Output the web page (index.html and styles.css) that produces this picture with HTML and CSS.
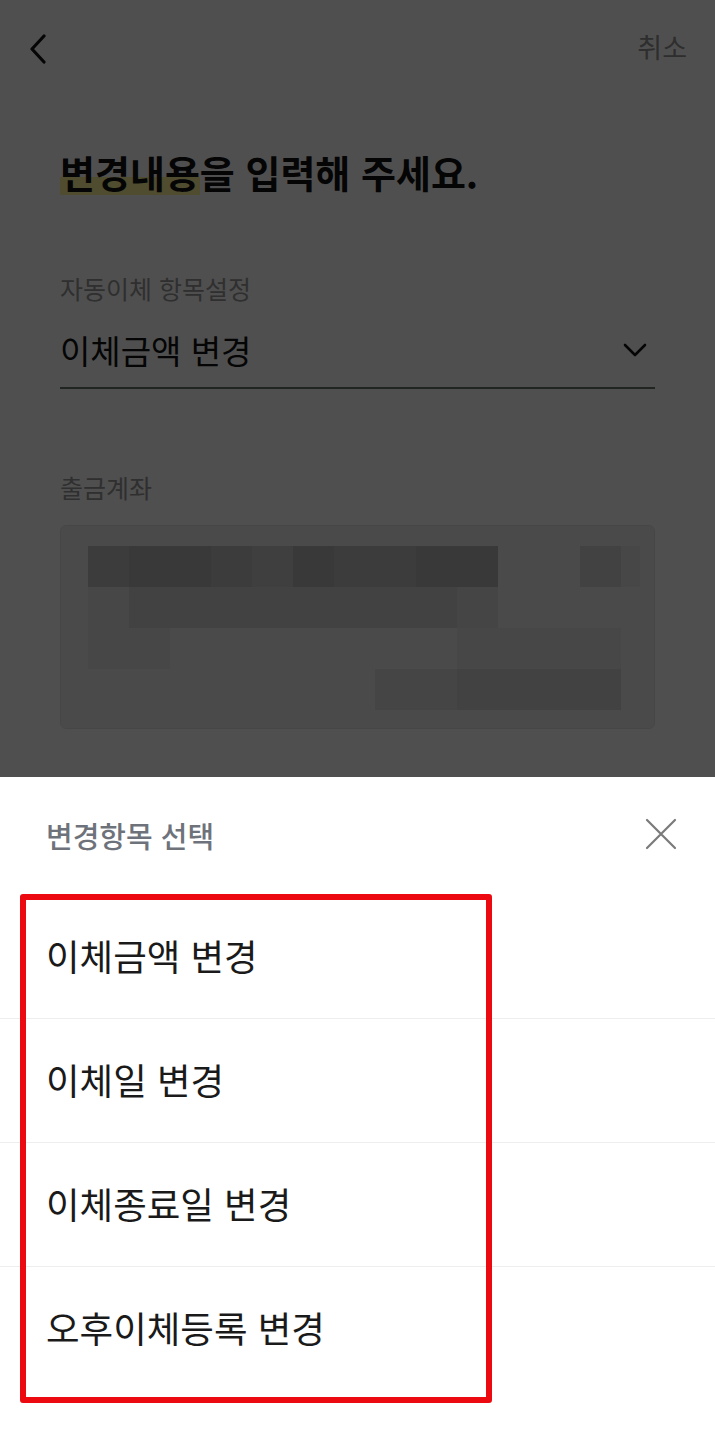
FILE: index.html
```html
<!DOCTYPE html>
<html lang="ko">
<head>
    <meta charset="UTF-8">
    <meta name="viewport" content="width=device-width, initial-scale=1.0">
    <title>자동이체 변경</title>
    <link rel="stylesheet" href="styles.css">
</head>
<body>
    <div class="screen">
        <header class="topbar">
            <button class="back" aria-label="뒤로">
                <svg width="20" height="30" viewBox="0 0 20 30"><path d="M16 2 L4 15 L16 28" fill="none" stroke="#111" stroke-width="3.2" stroke-linecap="round" stroke-linejoin="round"/></svg>
            </button>
            <span class="cancel">취소</span>
        </header>
        <main class="form">
            <h1><span class="mark-text">변경내용</span>을 입력해 주세요.</h1>
            <div class="field">
                <label>자동이체 항목설정</label>
                <div class="select">
                    <span>이체금액 변경</span>
                    <svg width="24" height="16" viewBox="0 0 24 16"><path d="M2 3 L12 13 L22 3" fill="none" stroke="#111" stroke-width="2.6" stroke-linecap="round" stroke-linejoin="round"/></svg>
                </div>
            </div>
            <div class="field">
                <label>출금계좌</label>
                <div class="account">
                    <div class="mosaic">
                        <i class="m2"></i><i class="m1"></i><i class="m1"></i><i class="m2"></i><i class="m3"></i><i class="m1"></i><i class="m2"></i><i class="m2"></i><i class="m1"></i><i class="m1"></i><i></i><i></i><i class="m4"></i><i class="m6"></i>
                        <i class="m6"></i><i class="m4"></i><i class="m4"></i><i class="m4"></i><i class="m4"></i><i class="m4"></i><i class="m4"></i><i class="m4"></i><i class="m4"></i><i class="m5"></i><i></i><i></i><i></i><i></i>
                        <i class="m6"></i><i class="m6"></i><i></i><i></i><i></i><i></i><i></i><i></i><i></i><i class="m6"></i><i class="m6"></i><i class="m6"></i><i class="m6"></i><i></i>
                        <i></i><i></i><i></i><i></i><i></i><i></i><i></i><i class="m5"></i><i class="m5"></i><i class="m4"></i><i class="m4"></i><i class="m4"></i><i class="m4"></i><i></i>
                    </div>
                </div>
            </div>
        </main>
    </div>

    <div class="dim"></div>

    <section class="sheet">
        <div class="sheet-head">
            <h2>변경항목 선택</h2>
            <button class="close" aria-label="닫기">
                <svg width="32" height="32" viewBox="0 0 32 32"><path d="M2 2 L30 30 M30 2 L2 30" fill="none" stroke="#7a7a7a" stroke-width="2.2" stroke-linecap="round"/></svg>
            </button>
        </div>
        <ul class="options">
            <li>이체금액 변경</li>
            <li>이체일 변경</li>
            <li>이체종료일 변경</li>
            <li>오후이체등록 변경</li>
            <div class="highlight"></div>
        </ul>
    </section>
</body>
</html>
```

FILE: styles.css
```css
body {
    font-family: "Noto Sans CJK KR", "Noto Sans", sans-serif;
    margin: 0;
    padding: 0;
    background-color: #ffffff;
    color: #111111;
    height: 1440px;
    overflow: hidden;
}
button {
    background: none;
    border: none;
    padding: 0;
    cursor: pointer;
}
.screen {
    background-color: #ffffff;
}
.topbar {
    display: flex;
    justify-content: space-between;
    align-items: center;
    height: 96px;
    padding: 0 28px 0 28px;
}
.back {
    display: flex;
    margin-top: 2px;
}
.cancel {
    font-size: 27px;
    color: #949494;
    margin-top: -4px;
}
.form {
    padding: 0 60px;
}
h1 {
    margin: 48px 0 0 0;
    font-size: 38px;
    font-weight: 700;
    line-height: 56px;
}
.mark-text {
    background: linear-gradient(to bottom, transparent 60%, #fdf59a 60%, #fdf59a 92%, transparent 92%);
}
.field {
    margin-top: 72px;
}
.field + .field {
    margin-top: 82px;
}
label {
    display: block;
    font-size: 25px;
    color: #999999;
    line-height: 32px;
}
.select {
    display: flex;
    justify-content: space-between;
    align-items: center;
    height: 85px;
    box-sizing: border-box;
    padding: 8px 8px 0 0;
    border-bottom: 2px solid #6a786a;
    font-size: 33px;
}
.account {
    margin-top: 22px;
    height: 204px;
    box-sizing: border-box;
    background-color: #efefef;
    border: 1px solid #e3e3e3;
    border-radius: 6px;
    padding: 20px 0 0 27px;
}
.mosaic {
    display: grid;
    grid-template-columns: repeat(13, 41px) 19px;
    grid-template-rows: repeat(4, 41px);
}
.m1 { background-color: #b8b8b8; }
.m2 { background-color: #c2c2c2; }
.m3 { background-color: #cbcbcb; }
.m4 { background-color: #d5d5d5; }
.m5 { background-color: #dedede; }
.m6 { background-color: #e6e6e6; }
.dim {
    position: fixed;
    inset: 0;
    background-color: rgba(0, 0, 0, 0.69);
}
.sheet {
    position: fixed;
    left: 0;
    right: 0;
    top: 777px;
    bottom: 0;
    background-color: #ffffff;
}
.sheet-head {
    display: flex;
    justify-content: space-between;
    align-items: center;
    height: 118px;
    padding: 0 38px 0 46px;
    box-sizing: border-box;
}
h2 {
    margin: -2px 0 0 0;
    font-size: 29px;
    font-weight: 500;
    color: #6e737b;
}
.close {
    display: flex;
    margin-top: -4px;
}
.options {
    list-style: none;
    margin: 0;
    padding: 0;
    position: relative;
}
.options li {
    height: 124px;
    box-sizing: border-box;
    display: flex;
    align-items: center;
    padding: 0 0 3px 46px;
    font-size: 36.5px;
    color: #1a1a1a;
    border-bottom: 1px solid #eeeeee;
}
.options li:last-of-type {
    border-bottom: none;
}
.highlight {
    position: absolute;
    left: 20px;
    top: -1px;
    width: 472px;
    height: 509px;
    box-sizing: border-box;
    border: 6px solid #ec0a10;
    border-radius: 3px;
}
```
